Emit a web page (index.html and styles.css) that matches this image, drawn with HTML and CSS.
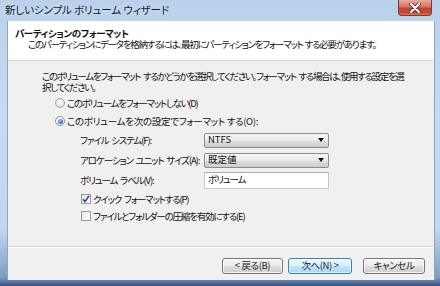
FILE: index.html
```html
<!DOCTYPE html>
<html lang="ja">

<head>
    <meta charset="UTF-8">
    <title>新しいシンプル ボリューム ウィザード</title>
    <link rel="stylesheet" href="styles.css">
</head>

<body>
    <div class="window">
        <div class="titlebar">
            <span class="title">新しいシンプル ボリューム ウィザード</span>
            <div class="close-btn">
                <svg width="12" height="10" viewBox="0 0 12 10">
                    <path d="M2 1 L10 9 M10 1 L2 9" stroke="#3a3a3a" stroke-width="3.6" stroke-linecap="round" />
                    <path d="M2 1 L10 9 M10 1 L2 9" stroke="#ffffff" stroke-width="2" stroke-linecap="round" />
                </svg>
            </div>
        </div>

        <div class="client">
            <div class="header">
                <h1>パーティションのフォーマット</h1>
                <p>このパーティションにデータを格納するには、最初にパーティションをフォーマット する必要があります。</p>
            </div>

            <div class="content">
                <p class="intro">このボリュームをフォーマット するかどうかを選択してください。フォーマット する場合は、使用する設定を選<br>択してください。</p>

                <div class="option opt-skip"><span class="radio"></span>このボリュームをフォーマットしない(D)</div>
                <div class="option opt-format"><span class="radio checked"></span>このボリュームを次の設定でフォーマット する(O):</div>

                <div class="settings">
                    <div class="field">
                        <label>ファイル システム(F):</label>
                        <div class="select">NTFS<span class="arrow"></span></div>
                    </div>
                    <div class="field">
                        <label>アロケーション ユニット サイズ(A):</label>
                        <div class="select">既定値<span class="arrow"></span></div>
                    </div>
                    <div class="field">
                        <label>ボリューム ラベル(V):</label>
                        <div class="textbox">ボリューム</div>
                    </div>

                    <div class="check-row">
                        <span class="checkbox">
                            <svg width="8" height="8" viewBox="0 0 8 8">
                                <path d="M1 4.2 L3 6.6 L7 0.8" fill="none" stroke="#2b4c9b" stroke-width="1.6" />
                            </svg>
                        </span>クイック フォーマットする(P)
                    </div>
                    <div class="check-row"><span class="checkbox"></span>ファイルとフォルダーの圧縮を有効にする(E)</div>
                </div>
            </div>

            <div class="footer">
                <button class="btn btn-back">&lt; 戻る(B)</button>
                <button class="btn btn-next">次へ(N) &gt;</button>
                <button class="btn btn-cancel">キャンセル</button>
            </div>
        </div>
    </div>
</body>

</html>
```

FILE: styles.css
```css
body,
html {
    margin: 0;
    padding: 0;
    width: 440px;
    height: 286px;
    overflow: hidden;
    font-family: "Noto Sans CJK JP", "Noto Sans", sans-serif;
    font-feature-settings: "palt";
    color: #111;
}

.window {
    width: 440px;
    height: 286px;
    box-sizing: border-box;
    padding: 0 5px 6px 7px;
    background: linear-gradient(to bottom, #b9d1ea 0%, #c6dbf1 40%, #c2d7ee 80%, #7e9cc4 97%, #33507e 100%);
    display: flex;
    flex-direction: column;
    position: relative;
}

.titlebar {
    height: 21px;
    flex-shrink: 0;
    display: flex;
    align-items: center;
    margin-left: -2px;
}

.title {
    font-size: 10.5px;
    letter-spacing: -0.1px;
    color: #1b1b1b;
    line-height: 1;
    margin-top: -1px;
    text-shadow: 0 0 6px #e4efff;
}

.close-btn {
    position: absolute;
    top: 0;
    left: 398px;
    width: 34px;
    height: 16px;
    box-sizing: border-box;
    border: 1px solid #7d3a32;
    border-top: none;
    border-radius: 0 0 4px 4px;
    background: linear-gradient(to bottom, #e9a99c 0%, #d77561 45%, #c24530 55%, #c94a34 85%, #e07a5a 100%);
    display: flex;
    justify-content: center;
    align-items: center;
}

.client {
    flex: 1;
    display: flex;
    flex-direction: column;
    background-color: #f0f0f0;
    border: 1px solid #8ea5c2;
    border-top: none;
    border-bottom: none;
    font-size: 9.5px;
    letter-spacing: -1px;
    word-spacing: 2px;
}

.header {
    height: 40px;
    box-sizing: border-box;
    background-color: #fff;
    border-bottom: 1px solid #d3d6da;
    padding: 6px 0 0 7px;
}

.header h1 {
    margin: 0;
    font-size: 9.5px;
    letter-spacing: -0.4px;
    line-height: 12px;
    font-weight: bold;
    color: #111;
}

.header p {
    margin: 0;
    padding-left: 13px;
    line-height: 11px;
    letter-spacing: -1.25px;
    word-spacing: 1px;
    white-space: nowrap;
}

.content {
    flex: 1;
    padding: 10px 0 0 34px;
    border-bottom: 1px solid #d5d5d5;
}

.intro {
    margin: 0;
    line-height: 11px;
    letter-spacing: -1.35px;
    white-space: nowrap;
}

.option {
    height: 18px;
    display: flex;
    align-items: center;
    padding-left: 13px;
}

.opt-skip {
    margin-top: 1px;
    letter-spacing: -1.3px;
}

.opt-format {
    letter-spacing: -0.3px;
    word-spacing: 0;
}

.radio {
    width: 10px;
    height: 10px;
    box-sizing: border-box;
    border-radius: 50%;
    border: 1px solid #a3a3a3;
    background: radial-gradient(circle at 50% 40%, #ffffff 0%, #e4e4e4 70%, #d6d6d6 100%);
    margin-right: 2px;
    display: flex;
    justify-content: center;
    align-items: center;
    flex-shrink: 0;
}

.radio.checked {
    border-color: #8c8f94;
    background: radial-gradient(circle at 50% 40%, #ffffff 0%, #f1f1f1 70%, #dedede 100%);
}

.radio.checked::after {
    content: "";
    width: 5px;
    height: 5px;
    border-radius: 50%;
    background: radial-gradient(circle at 40% 35%, #9fd3ff 0%, #2e7bd2 55%, #174f9c 100%);
}

.settings {
    padding-left: 38px;
}

.field {
    height: 20px;
    display: flex;
    align-items: center;
}

.field label {
    width: 124px;
    flex-shrink: 0;
    white-space: nowrap;
    letter-spacing: -1.1px;
    word-spacing: 1.5px;
}

.select {
    width: 125px;
    height: 15px;
    box-sizing: border-box;
    border: 1px solid #8b8b8b;
    border-radius: 2px;
    background: linear-gradient(to bottom, #f5f5f5 0%, #ebebeb 50%, #dddddd 51%, #cfcfcf 100%);
    padding-left: 3px;
    display: flex;
    align-items: center;
    justify-content: space-between;
    line-height: 1;
    letter-spacing: 0;
}

.arrow {
    width: 0;
    height: 0;
    border-left: 3px solid transparent;
    border-right: 3px solid transparent;
    border-top: 4px solid #111;
    margin-right: 4px;
}

.textbox {
    width: 125px;
    height: 17px;
    box-sizing: border-box;
    border: 1px solid #c4c8cc;
    border-top-color: #abadb3;
    background-color: #fff;
    padding-left: 3px;
    display: flex;
    align-items: center;
    line-height: 1;
    letter-spacing: -1.1px;
}

.check-row {
    height: 17px;
    display: flex;
    align-items: center;
    padding-left: 1px;
    letter-spacing: -1.2px;
}

.check-row:first-of-type {
    margin-top: 2px;
}

.checkbox {
    width: 10px;
    height: 10px;
    box-sizing: border-box;
    border: 1px solid #9a9a9a;
    background: linear-gradient(135deg, #e6e6e6 0%, #ffffff 100%);
    margin-right: 2px;
    display: flex;
    justify-content: center;
    align-items: center;
    flex-shrink: 0;
}

.footer {
    height: 33px;
    box-sizing: border-box;
    border-top: 1px solid #fff;
    padding: 10px 9px 0 0;
    display: flex;
    justify-content: flex-end;
    align-items: flex-start;
}

.btn {
    height: 16px;
    box-sizing: border-box;
    padding: 0;
    border: 1px solid #777;
    border-radius: 3px;
    background: linear-gradient(to bottom, #f4f4f4 0%, #ebebeb 50%, #dddddd 51%, #cfcfcf 100%);
    font-family: "Noto Sans CJK JP", "Noto Sans", sans-serif;
    font-feature-settings: "palt";
    font-size: 9.5px;
    letter-spacing: -0.4px;
    line-height: 1;
    color: #222;
    box-shadow: inset 0 0 0 1px rgba(255, 255, 255, 0.7);
}

.btn-back {
    width: 61px;
}

.btn-next {
    width: 64px;
    margin-left: 5px;
    border-color: #3c7fb1;
    background: linear-gradient(to bottom, #eaf6fd 0%, #d9f0fc 50%, #bee6fd 51%, #a7d9f5 100%);
    box-shadow: inset 0 0 0 1px rgba(255, 255, 255, 0.6);
}

.btn-cancel {
    width: 62px;
    margin-left: 11px;
}
```
